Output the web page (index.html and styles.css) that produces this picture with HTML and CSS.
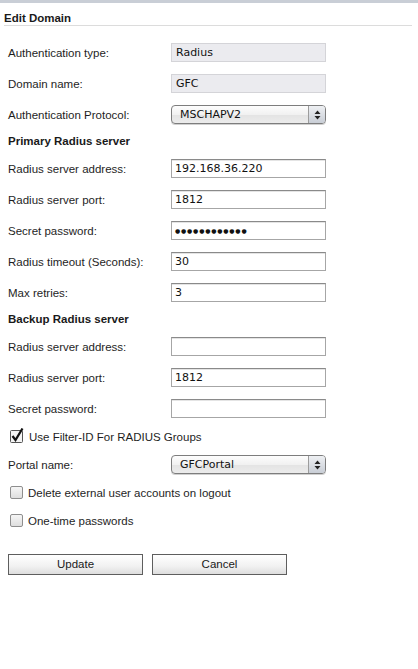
FILE: index.html
```html
<!DOCTYPE html>
<html>
<head>
<meta charset="utf-8">
<link rel="stylesheet" href="styles.css">
</head>
<body>
<div class="topbar"></div>
<div class="page">
  <div class="title">Edit Domain</div>
  <div class="form">
    <div class="row"><span class="label">Authentication type:</span><div class="field ro">Radius</div></div>
    <div class="row"><span class="label">Domain name:</span><div class="field ro">GFC</div></div>
    <div class="row"><span class="label">Authentication Protocol:</span>
      <div class="select"><span class="sel-text">MSCHAPV2</span><span class="stepper"><svg width="7" height="10" viewBox="0 0 7 10"><path d="M3.5 0.5 L6.5 4 L0.5 4 Z M0.5 6 L6.5 6 L3.5 9.5 Z" fill="#222"/></svg></span></div>
    </div>
    <div class="heading">Primary Radius server</div>
    <div class="row"><span class="label">Radius server address:</span><div class="field">192.168.36.220</div></div>
    <div class="row"><span class="label">Radius server port:</span><div class="field">1812</div></div>
    <div class="row"><span class="label">Secret password:</span><div class="field dots">&#9679;&#9679;&#9679;&#9679;&#9679;&#9679;&#9679;&#9679;&#9679;&#9679;&#9679;&#9679;</div></div>
    <div class="row"><span class="label">Radius timeout (Seconds):</span><div class="field">30</div></div>
    <div class="row"><span class="label">Max retries:</span><div class="field">3</div></div>
    <div class="heading">Backup Radius server</div>
    <div class="row"><span class="label">Radius server address:</span><div class="field"></div></div>
    <div class="row"><span class="label">Radius server port:</span><div class="field">1812</div></div>
    <div class="row"><span class="label">Secret password:</span><div class="field"></div></div>
    <div class="check-row short">
      <svg class="cb" width="14" height="15" viewBox="0 0 14 15"><rect x="0.5" y="2.5" width="12" height="12" rx="1" fill="#f4f4f4" stroke="#555"/><path d="M2.5 8 L5.5 12 L12.5 0.5" fill="none" stroke="#111" stroke-width="2.2"/></svg>
      <span>Use Filter-ID For RADIUS Groups</span>
    </div>
    <div class="row"><span class="label">Portal name:</span>
      <div class="select"><span class="sel-text">GFCPortal</span><span class="stepper"><svg width="7" height="10" viewBox="0 0 7 10"><path d="M3.5 0.5 L6.5 4 L0.5 4 Z M0.5 6 L6.5 6 L3.5 9.5 Z" fill="#222"/></svg></span></div>
    </div>
    <div class="check-row short">
      <span class="box"></span><span>Delete external user accounts on logout</span>
    </div>
    <div class="check-row">
      <span class="box"></span><span>One-time passwords</span>
    </div>
  </div>
  <div class="buttons">
    <div class="btn">Update</div>
    <div class="btn">Cancel</div>
  </div>
</div>
</body>
</html>
```
FILE: styles.css
```css
html, body {
  margin: 0;
  padding: 0;
  background: #fff;
}
body {
  font-family: "Liberation Sans", Arial, sans-serif;
  font-size: 11.5px;
  color: #1e1e1e;
}
.topbar {
  height: 3px;
  background: #c9ced6;
}
.page {
  padding: 0 6px 0 4px;
}
.title {
  font-weight: bold;
  font-size: 11.5px;
  color: #1a1a1a;
  padding-top: 8px;
  height: 14px;
  line-height: 14px;
  border-bottom: 1px solid #dcdcdc;
}
.form {
  padding-left: 4px;
  padding-top: 11px;
}
.row {
  height: 31px;
  display: flex;
  align-items: center;
}
.label {
  width: 163px;
  flex: none;
}
.field {
  box-sizing: border-box;
  width: 155px;
  height: 19px;
  border: 1px solid #a6a6a6;
  border-top-color: #8a8a8a;
  background: #fff;
  font-family: "DejaVu Sans", sans-serif;
  font-size: 11px;
  color: #111;
  line-height: 17px;
  padding-left: 3px;
  box-shadow: inset 0 1px 0 #e4e4e4;
}
.field.ro {
  background: #ebebef;
  border-color: #d4d4d8;
  box-shadow: none;
  padding-left: 4px;
}
.field.dots {
  font-size: 6px;
  letter-spacing: 0.8px;
  line-height: 17px;
  padding-left: 3px;
}
.select {
  box-sizing: border-box;
  width: 155px;
  height: 19px;
  border: 1px solid #7d7d7d;
  border-radius: 4px;
  background: linear-gradient(#fdfdfd, #f1f1f1 50%, #e3e3e3 51%, #ececec);
  display: flex;
  align-items: center;
  box-shadow: 0 1px 0 #d0d0d0;
}
.sel-text {
  flex: 1;
  padding-left: 8px;
  font-family: "DejaVu Sans", sans-serif;
  font-size: 11px;
  color: #111;
}
.stepper {
  width: 16px;
  height: 17px;
  border-left: 1px solid #9c9c9c;
  background: linear-gradient(#eef0f3, #c9ced6);
  border-radius: 0 3px 3px 0;
  display: flex;
  align-items: center;
  justify-content: center;
}
.heading {
  height: 23px;
  line-height: 23px;
  font-weight: bold;
  color: #1a1a1a;
}
.check-row {
  height: 31px;
  display: flex;
  align-items: center;
  gap: 5px;
  padding-left: 2px;
}
.check-row.short {
  height: 25px;
}
.cb {
  flex: none;
  margin-top: -2px;
}
.box {
  box-sizing: border-box;
  width: 13px;
  height: 13px;
  border: 1px solid #8e8e8e;
  border-radius: 2px;
  background: linear-gradient(#f6f6f6, #dedede);
  flex: none;
}
.buttons {
  display: flex;
  gap: 9px;
  padding-left: 4px;
  margin-top: 18px;
}
.btn {
  box-sizing: border-box;
  width: 135px;
  height: 21px;
  border: 1px solid #5e5e5e;
  background: linear-gradient(#ffffff, #f1f1f1 60%, #dedede);
  text-align: center;
  line-height: 19px;
  color: #1a1a1a;
}
```
